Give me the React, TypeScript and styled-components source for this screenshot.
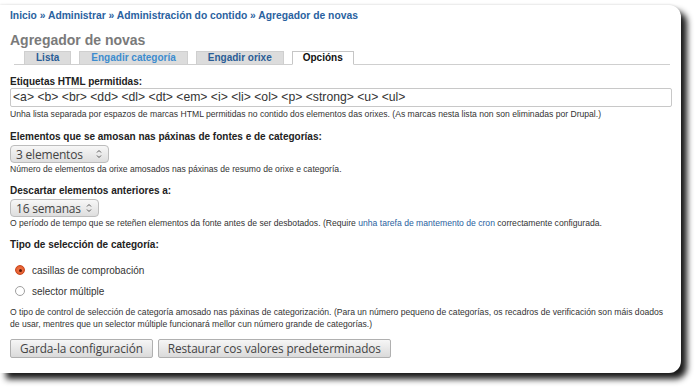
import React from "react"
import styled, { createGlobalStyle } from "styled-components"

const GlobalStyle = createGlobalStyle`
  html, body {
    margin: 0;
    padding: 0;
    background: #fff;
    font-family: "Liberation Sans", Arial, sans-serif;
    color: #222;
  }
`

const Page = styled.div`
  width: 700px;
  height: 392px;
  padding-top: 5px;
  box-sizing: border-box;
`

const Panel = styled.div`
  width: 681px;
  height: 368px;
  box-sizing: border-box;
  background: #fff;
  border-radius: 0 12px 12px 0;
  box-shadow: 6px 6px 6px rgba(0, 0, 0, 0.9), 0 -1px 2px rgba(0, 0, 0, 0.08);
  padding: 4px 10px 0 10px;
`

const Breadcrumb = styled.div`
  font-size: 10.3px;
  font-weight: bold;
  line-height: 14px;
  color: #2a62a0;
`

const Title = styled.h1`
  margin: 9px 0 0;
  font-size: 14px;
  line-height: 16px;
  font-weight: bold;
  color: #7a7a7a;
`

const TabBar = styled.ul`
  list-style: none;
  display: flex;
  gap: 8px;
  margin: 3px 1px 0 4px;
  padding: 0 0 0 10px;
  height: 13px;
  border-bottom: 1px solid #cfcfcf;
`

const Tab = styled.li<{ $active?: boolean; $tone?: string }>`
  height: ${(p) => (p.$active ? "14px" : "13px")};
  padding: 0 ${(p) => (p.$active ? "10px" : "11px")};
  box-sizing: border-box;
  border: 1px solid ${(p) => (p.$active ? "#c6c6c6" : "#cfcfcf")};
  border-bottom: ${(p) => (p.$active ? "1px solid #fff" : "none")};
  background: ${(p) => (p.$active ? "#fff" : "#dcdcdc")};
  font-size: 10px;
  font-weight: bold;
  line-height: 12px;
  color: ${(p) => (p.$active ? "#111" : p.$tone || "#2a5d96")};
`

const Field = styled.div<{ $top: number }>`
  margin-top: ${(p) => p.$top}px;
`

const Label = styled.div`
  font-size: 10px;
  font-weight: bold;
  line-height: 13px;
  color: #222;
`

const TextInput = styled.div`
  height: 19px;
  width: 662px;
  box-sizing: border-box;
  border: 1px solid #c8c8c8;
  border-radius: 2px;
  padding: 0 2px;
  font-size: 12.2px;
  line-height: 17px;
  color: #333;
`

const Description = styled.div<{ $top?: number }>`
  font-size: 8.6px;
  line-height: 12px;
  color: #333;
  margin-top: ${(p) => p.$top ?? 0}px;
`

const Link = styled.a`
  color: #2a62a0;
  text-decoration: none;
`

const Select = styled.div<{ $width: number }>`
  margin-top: 2px;
  width: ${(p) => p.$width}px;
  height: 18px;
  box-sizing: border-box;
  display: flex;
  align-items: center;
  justify-content: space-between;
  padding: 0 6px 0 5px;
  border: 1px solid #bdbdbd;
  border-radius: 4px;
  background: linear-gradient(#f7f7f7, #dedede);
  font-family: "Open Sans", "DejaVu Sans", sans-serif;
  font-size: 12px;
  letter-spacing: -0.2px;
  color: #444;
`

const Radios = styled.div`
  margin-top: 12px;
  display: flex;
  flex-direction: column;
  gap: 7px;
`

const RadioRow = styled.label`
  display: flex;
  align-items: center;
  gap: 7px;
  padding-left: 5px;
  height: 14px;
  font-size: 10px;
  color: #333;
`

const RadioDot = styled.span<{ $checked?: boolean }>`
  width: 10px;
  height: 10px;
  border-radius: 50%;
  box-sizing: border-box;
  display: flex;
  align-items: center;
  justify-content: center;
  border: 1px solid ${(p) => (p.$checked ? "#c8461c" : "#a0a0a0")};
  background: ${(p) =>
    p.$checked ? "radial-gradient(circle, #f07a52, #e0521f)" : "#fff"};

  &::after {
    content: "";
    display: ${(p) => (p.$checked ? "block" : "none")};
    width: 3px;
    height: 3px;
    border-radius: 50%;
    background: #5a1a08;
  }
`

const Buttons = styled.div`
  margin-top: 9px;
  display: flex;
  gap: 5px;
`

const Button = styled.button`
  height: 19px;
  padding: 0 9px;
  border: 1px solid #b0b0b0;
  border-radius: 2px;
  background: linear-gradient(#f6f6f6, #dadada);
  font-family: "Open Sans", "DejaVu Sans", sans-serif;
  font-size: 11.8px;
  letter-spacing: -0.1px;
  line-height: 17px;
  color: #444;
`

const Spinner = () => (
  <svg width="6" height="10" viewBox="0 0 6 10">
    <path d="M1 3.5 L3 1.5 L5 3.5" fill="none" stroke="#555" strokeWidth="1" />
    <path d="M1 6.5 L3 8.5 L5 6.5" fill="none" stroke="#555" strokeWidth="1" />
  </svg>
)

export default function App() {
  return (
    <>
      <GlobalStyle />
      <Page>
        <Panel>
          <Breadcrumb>
            Inicio » Administrar » Administración do contido » Agregador de novas
          </Breadcrumb>
          <Title>Agregador de novas</Title>
          <TabBar>
            <Tab>Lista</Tab>
            <Tab $tone="#3d8ccf">Engadir categoría</Tab>
            <Tab>Engadir orixe</Tab>
            <Tab $active>Opcións</Tab>
          </TabBar>

          <Field $top={10}>
            <Label>Etiquetas HTML permitidas:</Label>
            <TextInput>
              {"<a> <b> <br> <dd> <dl> <dt> <em> <i> <li> <ol> <p> <strong> <u> <ul>"}
            </TextInput>
            <Description $top={1}>
              Unha lista separada por espazos de marcas HTML permitidas no contido dos elementos das orixes. (As marcas nesta lista non son eliminadas por Drupal.)
            </Description>
          </Field>

          <Field $top={10}>
            <Label>Elementos que se amosan nas páxinas de fontes e de categorías:</Label>
            <Select $width={99}>
              3 elementos <Spinner />
            </Select>
            <Description>
              Número de elementos da orixe amosados nas páxinas de resumo de orixe e categoría.
            </Description>
          </Field>

          <Field $top={9}>
            <Label>Descartar elementos anteriores a:</Label>
            <Select $width={89}>
              16 semanas <Spinner />
            </Select>
            <Description>
              O período de tempo que se reteñen elementos da fonte antes de ser desbotados. (Require{" "}
              <Link href="#">unha tarefa de mantemento de cron</Link> correctamente configurada.
            </Description>
          </Field>

          <Field $top={9}>
            <Label>Tipo de selección de categoría:</Label>
            <Radios>
              <RadioRow>
                <RadioDot $checked />
                casillas de comprobación
              </RadioRow>
              <RadioRow>
                <RadioDot />
                selector múltiple
              </RadioRow>
            </Radios>
          </Field>

          <Field $top={8}>
            <Description>
              O tipo de control de selección de categoría amosado nas páxinas de categorización. (Para un número pequeno de categorías, os recadros de verificación son máis doados de usar, mentres que un selector múltiple funcionará mellor cun número grande de categorías.)
            </Description>
          </Field>

          <Buttons>
            <Button>Garda-la configuración</Button>
            <Button>Restaurar cos valores predeterminados</Button>
          </Buttons>
        </Panel>
      </Page>
    </>
  )
}
